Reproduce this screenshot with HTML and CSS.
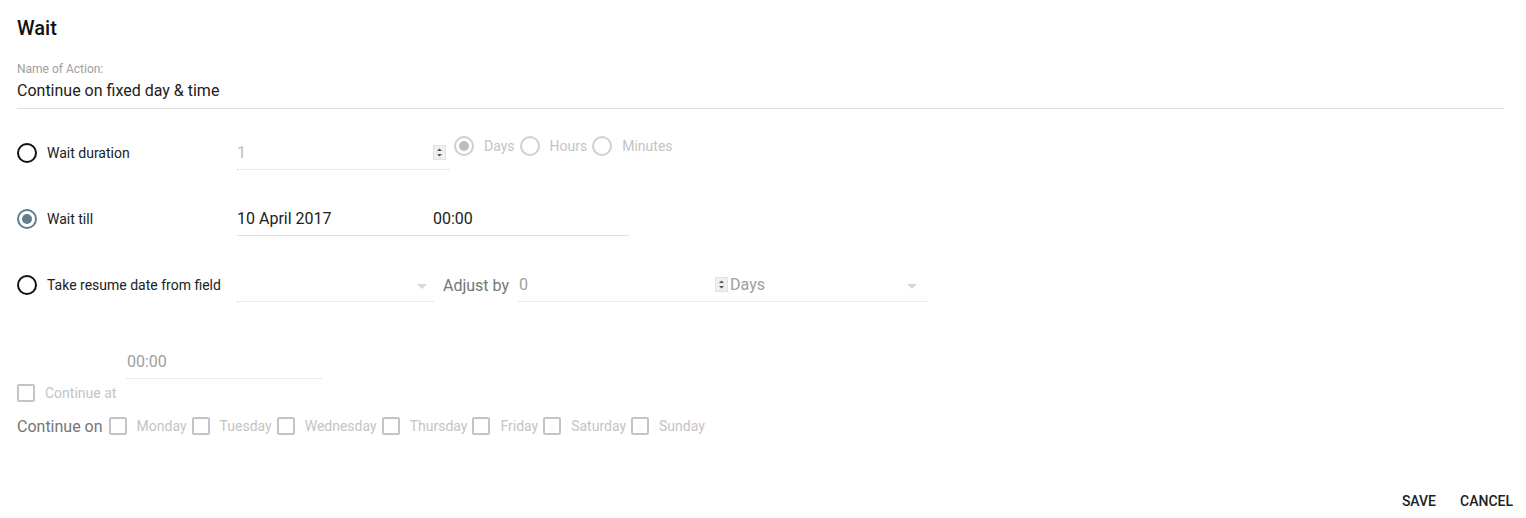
FILE: index.html
```html
<!DOCTYPE html>
<html lang="en">
<head>
  <meta charset="UTF-8" />
  <title>Wait</title>
  <link rel="stylesheet" href="styles.css">
</head>
<body>
  <div class="dialog">
    <h2 class="title">Wait</h2>

    <!-- Action name -->
    <div class="name-field">
      <label class="name-label">Name of Action:</label>
      <div class="name-value">Continue on fixed day &amp; time</div>
    </div>

    <!-- Wait duration -->
    <div class="option-row">
      <div class="option">
        <span class="radio"></span>
        <span class="option-text">Wait duration</span>
      </div>
      <div class="input input-disabled duration-input">
        <span>1</span>
        <span class="spinner"><svg width="13" height="15" viewBox="0 0 13 15"><rect x="0.5" y="0.5" width="12" height="14" fill="#efefef" stroke="#e2e2e2"/><path d="M4 6h5L6.5 3.5z" fill="#555"/><path d="M4 9h5l-2.5 2.5z" fill="#555"/></svg></span>
      </div>
      <div class="units">
        <span class="radio radio-off checked"></span><span class="unit-text">Days</span>
        <span class="radio radio-off"></span><span class="unit-text">Hours</span>
        <span class="radio radio-off"></span><span class="unit-text">Minutes</span>
      </div>
    </div>

    <!-- Wait till -->
    <div class="option-row">
      <div class="option">
        <span class="radio checked"></span>
        <span class="option-text">Wait till</span>
      </div>
      <div class="input date-input">
        <span class="date-text">10 April 2017</span>
        <span>00:00</span>
      </div>
    </div>

    <!-- From field -->
    <div class="option-row">
      <div class="option">
        <span class="radio"></span>
        <span class="option-text">Take resume date from field</span>
      </div>
      <div class="input input-disabled field-select">
        <span></span>
        <span class="caret"></span>
      </div>
      <span class="adjust-label">Adjust by</span>
      <div class="input input-disabled adjust-input">
        <span class="adjust-num">0</span>
        <span class="spinner"><svg width="13" height="15" viewBox="0 0 13 15"><rect x="0.5" y="0.5" width="12" height="14" fill="#efefef" stroke="#e2e2e2"/><path d="M4 6h5L6.5 3.5z" fill="#555"/><path d="M4 9h5l-2.5 2.5z" fill="#555"/></svg></span>
        <span class="adjust-unit">Days</span>
        <span class="caret"></span>
      </div>
    </div>

    <!-- Continue at -->
    <div class="input input-disabled time-input">00:00</div>
    <div class="check-row">
      <span class="checkbox"></span>
      <span class="check-text">Continue at</span>
    </div>

    <!-- Continue on -->
    <div class="days-row">
      <span class="days-label">Continue on</span>
      <span class="checkbox"></span><span class="check-text">Monday</span>
      <span class="checkbox"></span><span class="check-text">Tuesday</span>
      <span class="checkbox"></span><span class="check-text">Wednesday</span>
      <span class="checkbox"></span><span class="check-text">Thursday</span>
      <span class="checkbox"></span><span class="check-text">Friday</span>
      <span class="checkbox"></span><span class="check-text">Saturday</span>
      <span class="checkbox"></span><span class="check-text">Sunday</span>
    </div>

    <div class="actions">
      <button class="btn">Save</button>
      <button class="btn">Cancel</button>
    </div>
  </div>
</body>
</html>
```

FILE: styles.css
```css
body {
  margin: 0;
  font-family: Roboto, "Liberation Sans", Arial, sans-serif;
  color: #212121;
  background: white;
}

.dialog {
  padding: 0 22px 0 17px;
}

.title {
  margin: 0;
  padding-top: 16px;
  font-size: 20px;
  font-weight: 500;
  line-height: 24px;
  color: #111;
}

.name-field {
  margin-top: 22px;
  border-bottom: 1px solid #e0e0e0;
  padding-bottom: 7px;
}

.name-label {
  display: block;
  font-size: 12px;
  line-height: 14px;
  color: #9e9e9e;
}

.name-value {
  margin-top: 5px;
  font-size: 16px;
  line-height: 20px;
}

.option-row {
  display: flex;
  align-items: center;
  height: 34px;
  margin-top: 27px;
}

.option-row + .option-row {
  margin-top: 32px;
}

.option {
  display: flex;
  align-items: center;
  width: 220px;
}

.option-text {
  font-size: 14px;
  margin-left: 10px;
}

.radio {
  box-sizing: border-box;
  width: 20px;
  height: 20px;
  border: 2px solid #111;
  border-radius: 50%;
  display: inline-flex;
  align-items: center;
  justify-content: center;
  flex-shrink: 0;
}

.radio.checked {
  border-color: #607d8b;
}

.radio.checked::after {
  content: "";
  width: 10px;
  height: 10px;
  border-radius: 50%;
  background: #607d8b;
}

.radio-off {
  border-color: #cfcfcf;
}

.radio-off.checked {
  border-color: #cfcfcf;
}

.radio-off.checked::after {
  background: #bdbdbd;
}

.input {
  box-sizing: border-box;
  height: 34px;
  display: flex;
  align-items: center;
  font-size: 16px;
  border-bottom: 1px solid #e0e0e0;
}

.input-disabled {
  color: #bdbdbd;
  border-bottom: 1px dotted #d6d6d6;
}

.duration-input {
  width: 212px;
  justify-content: space-between;
  padding-right: 3px;
}

.spinner {
  display: flex;
}

.units {
  display: flex;
  align-items: center;
  align-self: flex-start;
  height: 20px;
  margin-left: 5px;
}

.unit-text {
  font-size: 14px;
  color: #c4c4c4;
  margin: 0 5px 0 10px;
}

.date-input {
  width: 392px;
}

.date-text {
  width: 196px;
}

.field-select {
  width: 196px;
  justify-content: space-between;
  padding-right: 6px;
}

.caret {
  width: 0;
  height: 0;
  border-left: 5px solid transparent;
  border-right: 5px solid transparent;
  border-top: 5px solid #d8d8d8;
  margin-top: 4px;
}

.adjust-label {
  font-size: 16px;
  color: #757575;
  margin: 0 10px;
}

.adjust-input {
  width: 408px;
  color: #9e9e9e;
  padding-right: 10px;
}

.adjust-num {
  width: 196px;
}

.adjust-unit {
  flex: 1;
  margin-left: 2px;
}

.time-input {
  width: 194px;
  margin: 43px 0 0 110px;
  color: #9e9e9e;
}

.check-row,
.days-row {
  display: flex;
  align-items: center;
}

.check-row {
  margin-top: 5px;
  height: 18px;
}

.days-row {
  margin-top: 15px;
  height: 18px;
}

.checkbox {
  box-sizing: border-box;
  width: 18px;
  height: 18px;
  border: 2px solid #c4c4c4;
  border-radius: 2px;
  flex-shrink: 0;
}

.check-text {
  font-size: 14px;
  color: #c4c4c4;
  margin: 0 5px 0 10px;
}

.days-label {
  font-size: 16px;
  color: #757575;
  margin-right: 6px;
}

.actions {
  display: flex;
  justify-content: flex-end;
  margin: 48px -21px 0 0;
}

.btn {
  background: none;
  border: none;
  font-family: inherit;
  font-size: 14px;
  font-weight: 500;
  text-transform: uppercase;
  color: #212121;
  padding: 0 12px;
  height: 36px;
}
```
